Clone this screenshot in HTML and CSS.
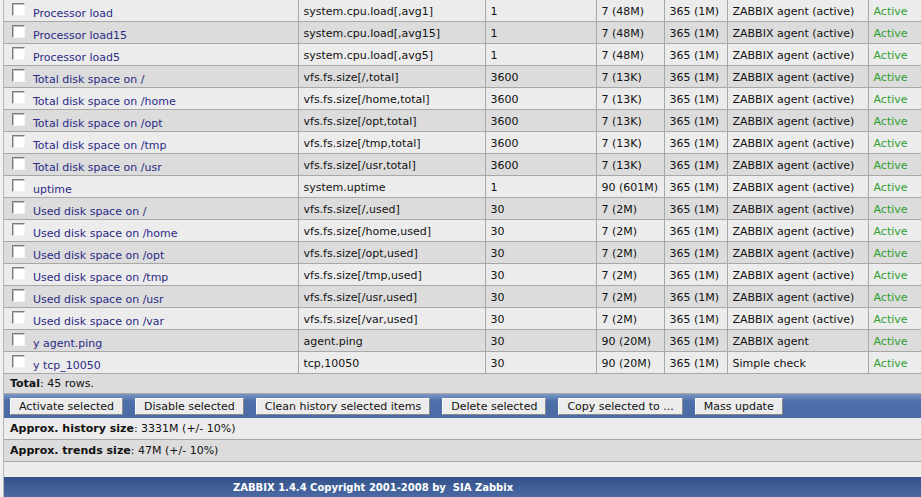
FILE: index.html
```html
<!DOCTYPE html>
<html lang="en">
<head>
  <meta charset="UTF-8">
  <title>Items</title>
  <link rel="stylesheet" href="styles.css">
</head>
<body>

<div class="page">
  <table class="items">
    <colgroup>
      <col style="width:294px"><col style="width:187px"><col style="width:111px"><col style="width:68px">
      <col style="width:63px"><col style="width:141px"><col style="width:72px">
    </colgroup>
    <tr class="odd"><td class="name"><span class="cb"></span><a href="#">Processor load</a></td><td>system.cpu.load[,avg1]</td><td>1</td><td>7 (48M)</td><td>365 (1M)</td><td>ZABBIX agent (active)</td><td class="on">Active</td></tr>
    <tr class="even"><td class="name"><span class="cb"></span><a href="#">Processor load15</a></td><td>system.cpu.load[,avg15]</td><td>1</td><td>7 (48M)</td><td>365 (1M)</td><td>ZABBIX agent (active)</td><td class="on">Active</td></tr>
    <tr class="odd"><td class="name"><span class="cb"></span><a href="#">Processor load5</a></td><td>system.cpu.load[,avg5]</td><td>1</td><td>7 (48M)</td><td>365 (1M)</td><td>ZABBIX agent (active)</td><td class="on">Active</td></tr>
    <tr class="even"><td class="name"><span class="cb"></span><a href="#">Total disk space on /</a></td><td>vfs.fs.size[/,total]</td><td>3600</td><td>7 (13K)</td><td>365 (1M)</td><td>ZABBIX agent (active)</td><td class="on">Active</td></tr>
    <tr class="odd"><td class="name"><span class="cb"></span><a href="#">Total disk space on /home</a></td><td>vfs.fs.size[/home,total]</td><td>3600</td><td>7 (13K)</td><td>365 (1M)</td><td>ZABBIX agent (active)</td><td class="on">Active</td></tr>
    <tr class="even"><td class="name"><span class="cb"></span><a href="#">Total disk space on /opt</a></td><td>vfs.fs.size[/opt,total]</td><td>3600</td><td>7 (13K)</td><td>365 (1M)</td><td>ZABBIX agent (active)</td><td class="on">Active</td></tr>
    <tr class="odd"><td class="name"><span class="cb"></span><a href="#">Total disk space on /tmp</a></td><td>vfs.fs.size[/tmp,total]</td><td>3600</td><td>7 (13K)</td><td>365 (1M)</td><td>ZABBIX agent (active)</td><td class="on">Active</td></tr>
    <tr class="even"><td class="name"><span class="cb"></span><a href="#">Total disk space on /usr</a></td><td>vfs.fs.size[/usr,total]</td><td>3600</td><td>7 (13K)</td><td>365 (1M)</td><td>ZABBIX agent (active)</td><td class="on">Active</td></tr>
    <tr class="odd"><td class="name"><span class="cb"></span><a href="#">uptime</a></td><td>system.uptime</td><td>1</td><td>90 (601M)</td><td>365 (1M)</td><td>ZABBIX agent (active)</td><td class="on">Active</td></tr>
    <tr class="even"><td class="name"><span class="cb"></span><a href="#">Used disk space on /</a></td><td>vfs.fs.size[/,used]</td><td>30</td><td>7 (2M)</td><td>365 (1M)</td><td>ZABBIX agent (active)</td><td class="on">Active</td></tr>
    <tr class="odd"><td class="name"><span class="cb"></span><a href="#">Used disk space on /home</a></td><td>vfs.fs.size[/home,used]</td><td>30</td><td>7 (2M)</td><td>365 (1M)</td><td>ZABBIX agent (active)</td><td class="on">Active</td></tr>
    <tr class="even"><td class="name"><span class="cb"></span><a href="#">Used disk space on /opt</a></td><td>vfs.fs.size[/opt,used]</td><td>30</td><td>7 (2M)</td><td>365 (1M)</td><td>ZABBIX agent (active)</td><td class="on">Active</td></tr>
    <tr class="odd"><td class="name"><span class="cb"></span><a href="#">Used disk space on /tmp</a></td><td>vfs.fs.size[/tmp,used]</td><td>30</td><td>7 (2M)</td><td>365 (1M)</td><td>ZABBIX agent (active)</td><td class="on">Active</td></tr>
    <tr class="even"><td class="name"><span class="cb"></span><a href="#">Used disk space on /usr</a></td><td>vfs.fs.size[/usr,used]</td><td>30</td><td>7 (2M)</td><td>365 (1M)</td><td>ZABBIX agent (active)</td><td class="on">Active</td></tr>
    <tr class="odd"><td class="name"><span class="cb"></span><a href="#">Used disk space on /var</a></td><td>vfs.fs.size[/var,used]</td><td>30</td><td>7 (2M)</td><td>365 (1M)</td><td>ZABBIX agent (active)</td><td class="on">Active</td></tr>
    <tr class="even"><td class="name"><span class="cb"></span><a href="#">y agent.ping</a></td><td>agent.ping</td><td>30</td><td>90 (20M)</td><td>365 (1M)</td><td>ZABBIX agent</td><td class="on">Active</td></tr>
    <tr class="odd"><td class="name"><span class="cb"></span><a href="#">y tcp_10050</a></td><td>tcp,10050</td><td>30</td><td>90 (20M)</td><td>365 (1M)</td><td>Simple check</td><td class="on">Active</td></tr>
  </table>

  <div class="total"><b>Total</b>: 45 rows.</div>

  <div class="actions">
    <button class="btn">Activate selected</button>
    <button class="btn">Disable selected</button>
    <button class="btn">Clean history selected items</button>
    <button class="btn">Delete selected</button>
    <button class="btn">Copy selected to ...</button>
    <button class="btn">Mass update</button>
  </div>

  <div class="info odd"><b>Approx. history size</b>: 3331M (+/- 10%)</div>
  <div class="info even"><b>Approx. trends size</b>: 47M (+/- 10%)</div>
  <div class="spacer"></div>

  <div class="footer">ZABBIX 1.4.4 Copyright 2001-2008 by&nbsp; SIA Zabbix</div>
</div>

</body>
</html>
```

FILE: styles.css
```css
/* Items list */
html, body {
  margin: 0;
  padding: 0;
  overflow: hidden;
  background-color: #f0f0f0;
}
body {
  font-family: "DejaVu Sans", Verdana, sans-serif;
  font-size: 11px;
  color: #111;
}
.page {
  width: 936px;
  margin-left: 3px;
  border-left: 1px solid #b8b8b8;
}
.items {
  border-collapse: collapse;
  table-layout: fixed;
  width: 936px;
}
.items td {
  height: 19px;
  padding: 2px 4px 0 5px;
  border: 1px solid #a8a8a8;
  border-top: none;
  white-space: nowrap;
  overflow: hidden;
  vertical-align: middle;
}
.items td:first-child {
  border-left: none;
}
.odd {
  background-color: #ececec;
}
.even {
  background-color: #dcdcdc;
}
.items td.name {
  padding: 0 4px 0 8px;
  vertical-align: top;
}
.cb {
  display: inline-block;
  width: 11px;
  height: 11px;
  margin-top: 3px;
  margin-right: 8px;
  background-color: #fff;
  border-top: 1px solid #7a7a7a;
  border-left: 1px solid #7a7a7a;
  border-bottom: 1px solid #f4f4f4;
  border-right: 1px solid #f4f4f4;
  box-shadow: inset 1px 1px 0 #c4c4c4;
  vertical-align: top;
}
.name a {
  display: inline-block;
  margin-top: 7px;
  color: #2b2b86;
  text-decoration: none;
}
.on {
  color: #2f9f2f;
}
.total {
  height: 19px;
  line-height: 19px;
  padding-left: 6px;
  background-color: #dcdcdc;
  border-bottom: 1px solid #a8a8a8;
}
.actions {
  height: 24px;
  display: flex;
  align-items: center;
  gap: 12px;
  padding-left: 6px;
  background: linear-gradient(#7b97c6, #4d6ea8 30%, #4a6aa4);
}
.btn {
  height: 17px;
  margin: 0;
  padding: 0 8px;
  font-family: "DejaVu Sans", Verdana, sans-serif;
  font-size: 11px;
  color: #111;
  background-color: #ececec;
  border: 1px solid;
  border-color: #fafafa #8a8a8a #8a8a8a #fafafa;
  cursor: pointer;
}
.info {
  height: 21px;
  line-height: 21px;
  padding-left: 6px;
  border-bottom: 1px solid #a8a8a8;
}
.spacer {
  height: 15px;
  background-color: #ececec;
}
.footer {
  height: 20px;
  line-height: 22px;
  padding-left: 229px;
  background: linear-gradient(#34528a, #4b6aa4);
  color: #fff;
  font-size: 10px;
  font-weight: bold;
}
```
